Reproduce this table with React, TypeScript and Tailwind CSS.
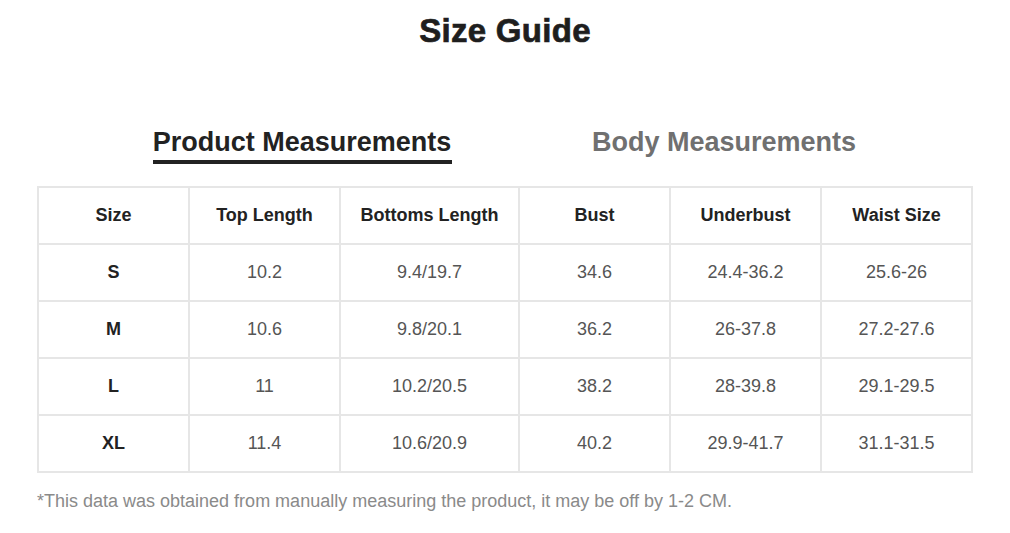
import React from "react";

const headers = ["Size", "Top Length", "Bottoms Length", "Bust", "Underbust", "Waist Size"];
const rows = [
  ["S", "10.2", "9.4/19.7", "34.6", "24.4-36.2", "25.6-26"],
  ["M", "10.6", "9.8/20.1", "36.2", "26-37.8", "27.2-27.6"],
  ["L", "11", "10.2/20.5", "38.2", "28-39.8", "29.1-29.5"],
  ["XL", "11.4", "10.6/20.9", "40.2", "29.9-41.7", "31.1-31.5"],
];

export default function App() {
  return (
    <div className="w-[1010px] h-[533px] bg-white font-['Liberation_Sans',Arial,sans-serif] overflow-hidden">
      <div className="h-[60px] flex items-center justify-center">
        <h1 className="text-[33px] font-bold text-[#1e1e1e] [-webkit-text-stroke:0.7px_#1e1e1e] tracking-[0.3px] leading-none mt-[1px]">Size Guide</h1>
      </div>
      <div className="h-[126px] flex items-start pt-[67px]">
        <div className="w-[422px] ml-[91px] flex flex-col items-center">
          <div className="text-[27px] font-bold text-[#222] leading-[31px]">Product Measurements</div>
          <div className="h-[4px] w-[299px] bg-[#222] mt-[2px]" />
        </div>
        <div className="w-[422px] flex flex-col items-center">
          <div className="text-[27px] font-bold text-[#707070] leading-[31px]">Body Measurements</div>
        </div>
      </div>
      <div className="ml-[37px] w-[936px] border-l-2 border-t-2 border-[#e6e6e6] grid grid-cols-[151px_151px_179px_151px_151px_151px]">
        {headers.map((h) => (
          <div key={h} className="h-[57px] border-r-2 border-b-2 border-[#e6e6e6] flex items-center justify-center text-[18px] font-bold text-[#222]">
            {h}
          </div>
        ))}
        {rows.map((r) =>
          r.map((c, i) => (
            <div
              key={r[0] + i}
              className={
                i === 0
                  ? "h-[57px] border-r-2 border-b-2 border-[#e6e6e6] flex items-center justify-center text-[18px] font-bold text-[#222]"
                  : "h-[57px] border-r-2 border-b-2 border-[#e6e6e6] flex items-center justify-center text-[18px] text-[#555]"
              }
            >
              {c}
            </div>
          ))
        )}
      </div>
      <div className="ml-[37px] mt-[17px] text-[18px] text-[#8a8a8a] leading-[22px] font-['Liberation_Sans_Narrow','Liberation_Sans',Arial,sans-serif]">
        *This data was obtained from manually measuring the product, it may be off by 1-2 CM.
      </div>
    </div>
  );
}
